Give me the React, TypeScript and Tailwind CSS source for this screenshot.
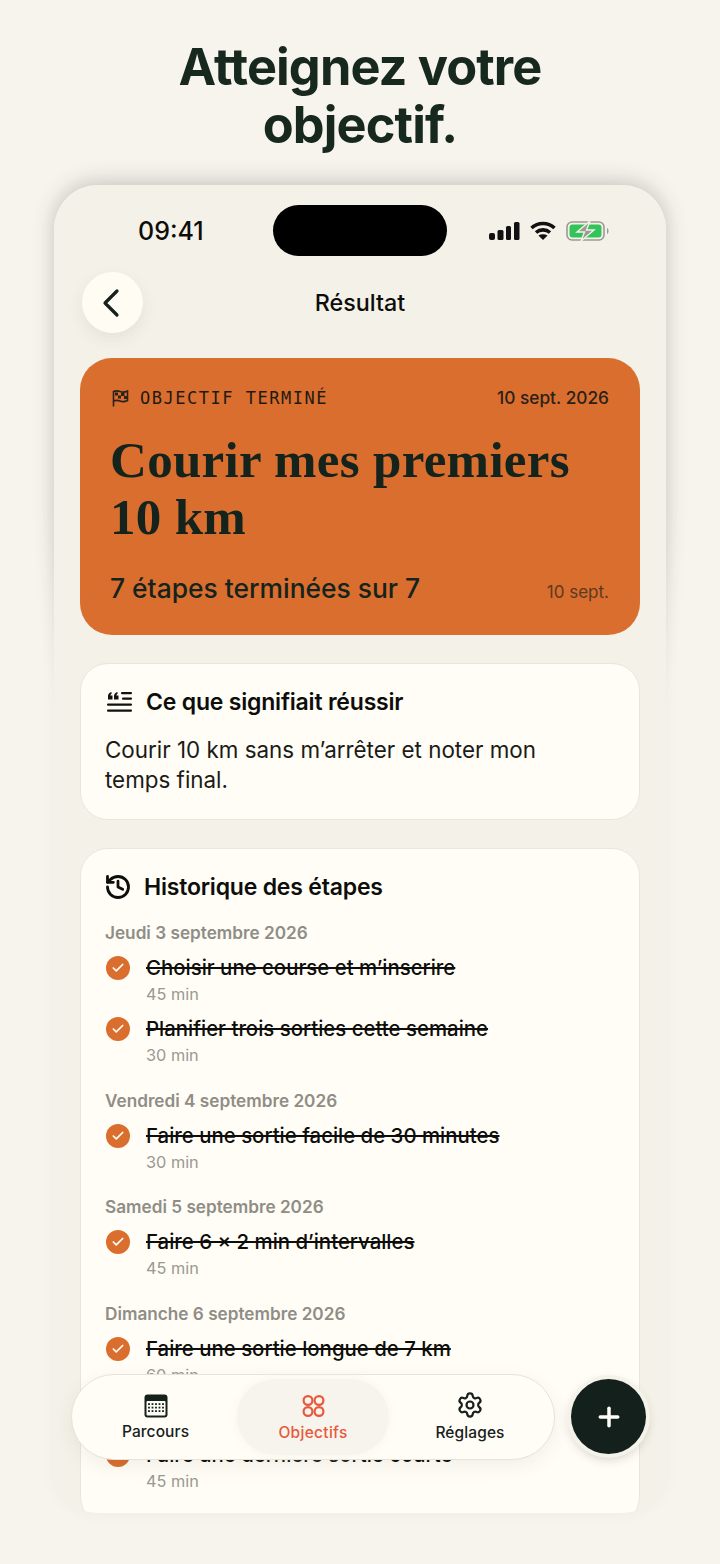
import React from 'react';
import { Check, History, Plus, Settings } from 'lucide-react';

const groups = [
  {
    date: 'Jeudi 3 septembre 2026',
    steps: [
      { title: 'Choisir une course et m’inscrire', time: '45 min' },
      { title: 'Planifier trois sorties cette semaine', time: '30 min' },
    ],
  },
  {
    date: 'Vendredi 4 septembre 2026',
    steps: [{ title: 'Faire une sortie facile de 30 minutes', time: '30 min' }],
  },
  {
    date: 'Samedi 5 septembre 2026',
    steps: [{ title: 'Faire 6 × 2 min d’intervalles', time: '45 min' }],
  },
  {
    date: 'Dimanche 6 septembre 2026',
    steps: [{ title: 'Faire une sortie longue de 7 km', time: '60 min' }],
  },
  {
    date: 'Jeudi 10 septembre 2026',
    steps: [{ title: 'Faire une dernière sortie courte', time: '45 min' }],
  },
];

const StatusIcons = () => (
  <div className="flex items-center gap-[10px]">
    <svg width="31" height="18" viewBox="0 0 31 18" fill="#111">
      <rect x="0" y="11" width="6" height="7" rx="2" />
      <rect x="8.5" y="8" width="6" height="10" rx="1.5" />
      <rect x="17" y="4" width="5" height="14" rx="1.5" />
      <rect x="25" y="0" width="5.5" height="18" rx="1.5" />
    </svg>
    <svg width="26" height="19" viewBox="0 0 26 19" fill="none" stroke="#111" strokeWidth="3.6">
      <path d="M1.5 7 C8 1 18 1 24.5 7" />
      <path d="M6 11.5 C10 8 16 8 20 11.5" />
      <path d="M13 19 L8.4 14.4 C11 12.8 15 12.8 17.6 14.4 Z" fill="#111" stroke="none" />
    </svg>
    <svg width="44" height="20" viewBox="0 0 44 20" fill="none">
      <rect x="1" y="1" width="37" height="18" rx="5" stroke="#9a9a94" strokeWidth="1.6" />
      <rect x="3.5" y="3.5" width="32" height="13" rx="3" fill="#32c35a" />
      <path d="M41 7 C43 7.5 43 12.5 41 13 Z" fill="#9a9a94" />
      <path d="M24 0 L11 11 H18.5 L15 20 L28 9 H20.5 Z" fill="#9a9a94" stroke="#f3f1e7" strokeWidth="1.4" />
    </svg>
  </div>
);

const FlagIcon = () => (
  <svg width="17" height="17" viewBox="0 0 17 17" fill="none">
    <path d="M1.5 16.5 V1.5 C4 .5 6 .7 8 1.5 C10 2.3 13 2.3 15.5 1 V10.5 C13 11.8 10 11.8 8 11 C6 10.2 4 10 1.5 11" stroke="#2a2118" strokeWidth="1.6" />
    <rect x="3" y="2.5" width="3" height="3" fill="#2a2118" />
    <rect x="9" y="3" width="3.5" height="3" fill="#2a2118" />
    <rect x="6" y="5.5" width="3" height="3" fill="#2a2118" />
    <rect x="12" y="6" width="3" height="3" fill="#2a2118" />
  </svg>
);

const QuoteIcon = () => (
  <svg width="26" height="22" viewBox="0 0 26 22" fill="#111">
    <rect x="0" y="12.5" width="25" height="2.2" rx="1" />
    <rect x="0" y="18.5" width="25" height="2.2" rx="1" />
    <rect x="14" y="1" width="11" height="2.2" rx="1" />
    <rect x="15" y="6.5" width="10" height="2.2" rx="1" />
    <path d="M1 8.5 V5 C1 3 2.5 1.5 4.5 1 V3 C3.6 3.4 3.4 4 3.4 4.6 H5.5 V8.5 Z" />
    <path d="M7 8.5 V5 C7 3 8.5 1.5 10.5 1 V3 C9.6 3.4 9.4 4 9.4 4.6 H11.5 V8.5 Z" />
  </svg>
);

const CalendarIcon = () => (
  <svg width="24" height="24" viewBox="0 0 24 24">
    <rect x="0.5" y="0.5" width="23" height="23" rx="3" fill="#16201c" />
    <rect x="2.5" y="7" width="19" height="14.5" rx="1" fill="#fdfcf5" />
    {[9.5, 13, 16.5].map((y) =>
      [5, 8.5, 12, 15.5, 19].map((x) => (
        <rect key={`${x}-${y}`} x={x - 0.9} y={y - 0.3} width="1.8" height="1.8" fill="#16201c" />
      ))
    )}
  </svg>
);

const GoalsIcon = () => (
  <svg width="23" height="24" viewBox="0 0 23 24" fill="none" stroke="#e8583c" strokeWidth="2.2">
    <circle cx="6" cy="6.5" r="4.4" />
    <circle cx="17" cy="6.5" r="4.4" />
    <circle cx="6" cy="17.5" r="4.4" />
    <circle cx="17" cy="17.5" r="4.4" />
  </svg>
);

const StepRow = ({ title, time }: { title: string; time: string }) => (
  <div className="flex gap-4 pl-px">
    <div className="mt-[3px] flex h-6 w-6 shrink-0 items-center justify-center rounded-full bg-[#d96e2f]">
      <Check size={14} strokeWidth={3} className="text-[#fffdf5]" />
    </div>
    <div className="flex flex-col">
      <span className="text-[20.4px] leading-[30px] font-medium whitespace-nowrap text-[#0d0d0b] line-through">{title}</span>
      <span className="text-[16.3px] leading-[22px] text-[#9a9892]">{time}</span>
    </div>
  </div>
);

export default function App() {
  return (
    <div
      className="flex h-[1564px] w-[720px] flex-col items-center overflow-hidden bg-[#f7f4ee]"
      style={{ fontFamily: 'Inter, sans-serif' }}
    >
      <h1 className="mt-[38px] text-center text-[50.5px] leading-[58px] font-bold tracking-[-0.9px] text-[#17291f]">
        Atteignez votre
        <br />
        objectif.
      </h1>

      <div className="relative mt-[31px] h-[1328px] w-[612px] shrink-0">
        {/* ombre plus marquée en haut du téléphone */}
        <div className="absolute inset-x-0 top-0 h-[900px] rounded-t-[44px] rounded-br-[306px_600px] rounded-bl-[306px_600px] shadow-[0_-4px_22px_rgba(50,45,30,0.2)]" />

        <div className="relative h-full overflow-hidden rounded-[44px] bg-[#f4f2e8] shadow-[0_0_18px_rgba(50,45,30,0.04)]">
          {/* barre de statut */}
          <div className="flex h-[67px] items-center justify-between pt-[24px] pr-[56px] pl-[84px]">
            <span className="text-[25px] leading-[30px] font-medium text-[#0d0d0b]">09:41</span>
            <StatusIcons />
          </div>
          <div className="absolute top-5 left-[219px] h-[51px] w-[174px] rounded-[26px] bg-black" />

          {/* en-tête */}
          <div className="relative mt-5 flex h-[61px] items-center justify-center">
            <button className="absolute left-7 flex h-[61px] w-[61px] items-center justify-center rounded-full bg-[#fffdf3] shadow-[0_6px_16px_rgba(60,50,20,0.08)]">
              <svg width="18" height="30" viewBox="0 0 18 30" fill="none" stroke="#16201c" strokeWidth="3.2" strokeLinecap="round" strokeLinejoin="round" className="mr-1">
                <path d="M15 3 L3 15 L15 27" />
              </svg>
            </button>
            <span className="text-[23.3px] leading-7 font-medium text-[#0d0d0b]">Résultat</span>
          </div>

          <div className="mt-[25px] flex flex-col gap-7 px-[26px]">
            {/* carte objectif */}
            <section className="flex h-[277px] flex-col rounded-[32px] bg-[#d96e2f] pt-7 pr-[31px] pl-[30px]">
              <div className="flex items-center justify-between">
                <div className="flex items-center gap-[11px] pl-[2px]">
                  <FlagIcon />
                  <span
                    className="text-[17px] leading-6 font-normal tracking-[1.52px] text-[#1f1a12]"
                    style={{ fontFamily: '"DejaVu Sans Mono", monospace' }}
                  >
                    OBJECTIF TERMINÉ
                  </span>
                </div>
                <span className="text-[17.3px] leading-6 font-medium text-[#2a2118]">10 sept. 2026</span>
              </div>
              <h2
                className="mt-[22px] text-[51px] leading-[57px] font-bold tracking-[0.3px] text-[#14231c]"
                style={{ fontFamily: '"Liberation Serif", serif' }}
              >
                Courir mes premiers
                <br />
                10 km
              </h2>
              <div className="mt-[26px] flex items-end justify-between">
                <span className="text-[26.4px] leading-8 font-[550] text-[#14231c]">7 étapes terminées sur 7</span>
                <span className="text-[17px] leading-6 text-[#5b3a20]">10 sept.</span>
              </div>
            </section>

            {/* critère de réussite */}
            <section className="h-[157px] rounded-[28px] border border-[#e9e6da] bg-[#fffdf6] px-6 pt-6">
              <div className="flex items-center gap-[13px]">
                <div className="ml-[2px]"><QuoteIcon /></div>
                <h3 className="text-[23px] leading-7 font-semibold tracking-[-0.2px] text-[#0d0d0b]">Ce que signifiait réussir</h3>
              </div>
              <p className="mt-[19px] pr-[50px] text-[22.4px] leading-[30px] text-[#1b1b18]">
                Courir 10 km sans m’arrêter et noter mon temps final.
              </p>
            </section>

            {/* historique */}
            <section className="rounded-[28px] border border-[#e9e6da] bg-[#fffdf6] px-6 pt-6 pb-8">
              <div className="-ml-px flex items-center gap-3">
                <History size={28} strokeWidth={2.4} className="text-[#0d0d0b]" />
                <h3 className="text-[23px] leading-7 font-semibold tracking-[-0.2px] text-[#0d0d0b]">Historique des étapes</h3>
              </div>
              <div className="mt-5 flex flex-col gap-[22.5px]">
                {groups.map((group) => (
                  <div key={group.date} className="flex flex-col">
                    <span className="text-[17.2px] leading-6 font-semibold text-[#8f8d86]">{group.date}</span>
                    <div className="mt-2 flex flex-col gap-[9px]">
                      {group.steps.map((step) => (
                        <StepRow key={step.title} title={step.title} time={step.time} />
                      ))}
                    </div>
                  </div>
                ))}
              </div>
            </section>
          </div>

          {/* barre de navigation */}
          <nav className="absolute top-[1189px] left-[17px] flex h-[86px] w-[484px] items-center rounded-[43px] border border-[#e6e3d8] bg-[#fffdf6] shadow-[0_6px_20px_rgba(60,50,20,0.07)]">
            <div className="flex w-[165px] flex-col items-center pt-px pl-[2px]">
              <CalendarIcon />
              <span className="mt-1 text-[15.5px] leading-5 font-medium tracking-[0.1px] text-[#16201c]">Parcours</span>
            </div>
            <div className="flex h-[76px] w-[152px] flex-col items-center justify-center rounded-[38px] bg-[#f6f4ec] shadow-[0_0_10px_rgba(246,244,236,0.9)]">
              <GoalsIcon />
              <span className="mt-[5px] -mb-[3px] text-[15.5px] leading-5 font-medium tracking-[0.3px] text-[#e8583c]">Objectifs</span>
            </div>
            <div className="-ml-[3px] flex flex-1 flex-col items-center">
              <Settings size={28} strokeWidth={1.9} className="text-[#16201c]" />
              <span className="mt-1 text-[15.5px] leading-5 font-medium tracking-[0.1px] text-[#16201c]">Réglages</span>
            </div>
          </nav>
          <button className="absolute top-[1194px] left-[517px] flex h-[75px] w-[75px] items-center justify-center rounded-full bg-[#14201b] shadow-[0_0_0_4px_#f5f3e9,0_4px_12px_rgba(40,35,20,0.25)]">
            <Plus size={30} strokeWidth={2.8} className="text-[#fffdf6]" />
          </button>
        </div>
      </div>
    </div>
  );
}
